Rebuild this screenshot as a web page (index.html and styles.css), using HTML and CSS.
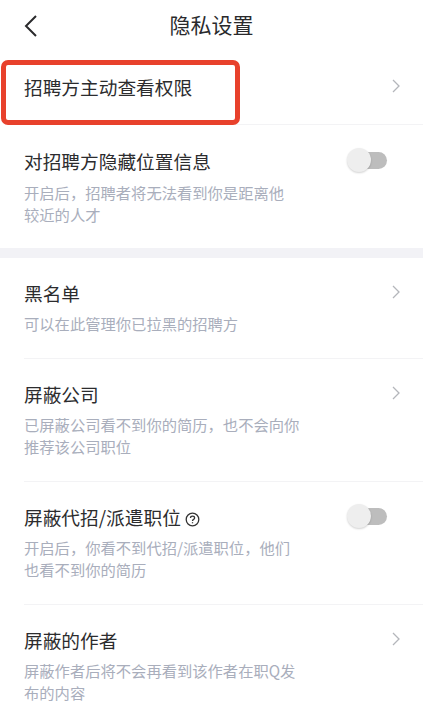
FILE: index.html
```html
<!DOCTYPE html>
<html lang="zh-CN">
<head>
  <meta charset="UTF-8" />
  <meta name="viewport" content="width=device-width, initial-scale=1.0" />
  <title>隐私设置</title>
  <link rel="stylesheet" href="styles.css">
</head>

<body>
  <div class="navbar">
    <svg class="back-icon" width="16" height="24" viewBox="0 0 16 24"><path d="M13 2 L3 12 L13 22" /></svg>
    <div class="navbar-title">隐私设置</div>
  </div>

  <div class="group">
    <div class="row row-first">
      <div class="row-head">
        <div class="row-title">招聘方主动查看权限</div>
        <svg class="chevron" width="8" height="14" viewBox="0 0 8 14"><path d="M1 1 L7 7 L1 13" /></svg>
      </div>
      <div class="highlight"></div>
    </div>
    <div class="row">
      <div class="row-head">
        <div class="row-title">对招聘方隐藏位置信息</div>
        <div class="switch"><div class="switch-knob"></div></div>
      </div>
      <div class="row-desc">开启后，招聘者将无法看到你是距离他<br>较近的人才</div>
    </div>
  </div>

  <div class="group-gap"></div>

  <div class="group">
    <div class="row">
      <div class="row-head">
        <div class="row-title">黑名单</div>
        <svg class="chevron" width="8" height="14" viewBox="0 0 8 14"><path d="M1 1 L7 7 L1 13" /></svg>
      </div>
      <div class="row-desc">可以在此管理你已拉黑的招聘方</div>
    </div>
    <div class="row">
      <div class="row-head">
        <div class="row-title">屏蔽公司</div>
        <svg class="chevron" width="8" height="14" viewBox="0 0 8 14"><path d="M1 1 L7 7 L1 13" /></svg>
      </div>
      <div class="row-desc">已屏蔽公司看不到你的简历，也不会向你<br>推荐该公司职位</div>
    </div>
    <div class="row">
      <div class="row-head">
        <div class="row-title">屏蔽代招/派遣职位
          <svg class="help-icon" width="15" height="15" viewBox="0 0 15 15">
            <circle cx="7.5" cy="7.5" r="6.3" />
            <path d="M5.5 6 C5.5 3.6 9.6 3.6 9.6 6 C9.6 7.4 7.5 7.4 7.5 9" />
            <path d="M7.5 10.2 L7.5 11.3" />
          </svg>
        </div>
        <div class="switch"><div class="switch-knob"></div></div>
      </div>
      <div class="row-desc">开启后，你看不到代招/派遣职位，他们<br>也看不到你的简历</div>
    </div>
    <div class="row">
      <div class="row-head">
        <div class="row-title">屏蔽的作者</div>
        <svg class="chevron" width="8" height="14" viewBox="0 0 8 14"><path d="M1 1 L7 7 L1 13" /></svg>
      </div>
      <div class="row-desc">屏蔽作者后将不会再看到该作者在职Q发<br>布的内容</div>
    </div>
  </div>
</body>
</html>
```

FILE: styles.css
```css
* {
  box-sizing: border-box;
}

html, body {
  height: 100%;
}

body {
  margin: 0;
  background: #fff;
  overflow: hidden;
  font-family: "Noto Sans CJK SC", "Noto Sans", sans-serif;
}

.navbar {
  position: relative;
  height: 60px;
  display: flex;
  align-items: center;
  justify-content: center;
  padding-bottom: 12px;
}

.navbar-title {
  font-size: 21px;
  line-height: 30px;
  color: #2a2a2c;
}

.back-icon {
  position: absolute;
  left: 23px;
  top: 14px;
}

.back-icon path {
  fill: none;
  stroke: #2a2a2c;
  stroke-width: 2;
}

.row {
  position: relative;
  margin-left: 24px;
  padding: 22px 23px 24px 0;
  border-bottom: 1px solid #f3f3f5;
}

.row:last-child {
  border-bottom: none;
}

.row-first {
  height: 65px;
  padding-top: 14px;
  padding-bottom: 0;
}

.row-first + .row {
  padding-top: 23px;
  padding-bottom: 23px;
  border-bottom: none;
}

.row-head {
  display: flex;
  align-items: center;
  justify-content: space-between;
  height: 26px;
}

.row-title {
  display: flex;
  align-items: center;
  gap: 4px;
  font-size: 18.7px;
  line-height: 26px;
  color: #2c2c2e;
}

.row-desc {
  margin-top: 6px;
  font-size: 15.3px;
  line-height: 22px;
  color: #a9aebc;
}

.row-first + .row .row-desc {
  margin-top: 7px;
}

.chevron {
  flex: none;
  margin-top: -2px;
}

.chevron path {
  fill: none;
  stroke: #b4b6bb;
  stroke-width: 1.3;
}

.help-icon {
  flex: none;
  margin-top: 4px;
}

.help-icon circle,
.help-icon path {
  fill: none;
  stroke: #333;
  stroke-width: 1.3;
}

.switch {
  position: relative;
  width: 35px;
  height: 17px;
  margin-top: -1px;
  margin-right: 13px;
  border-radius: 9px;
  background: #bdbdbd;
}

.switch-knob {
  position: absolute;
  left: -5px;
  top: -4px;
  width: 24px;
  height: 24px;
  border-radius: 50%;
  background: #eeeeee;
  box-shadow: 0 1px 2px rgba(0, 0, 0, 0.18);
}

.group-gap {
  height: 10px;
  background: #f2f2f6;
}

/* red annotation drawn over the first row */
.highlight {
  position: absolute;
  left: -23px;
  top: 0;
  width: 239px;
  height: 65px;
  border: 5px solid #e8412c;
  border-radius: 7px;
}
```
